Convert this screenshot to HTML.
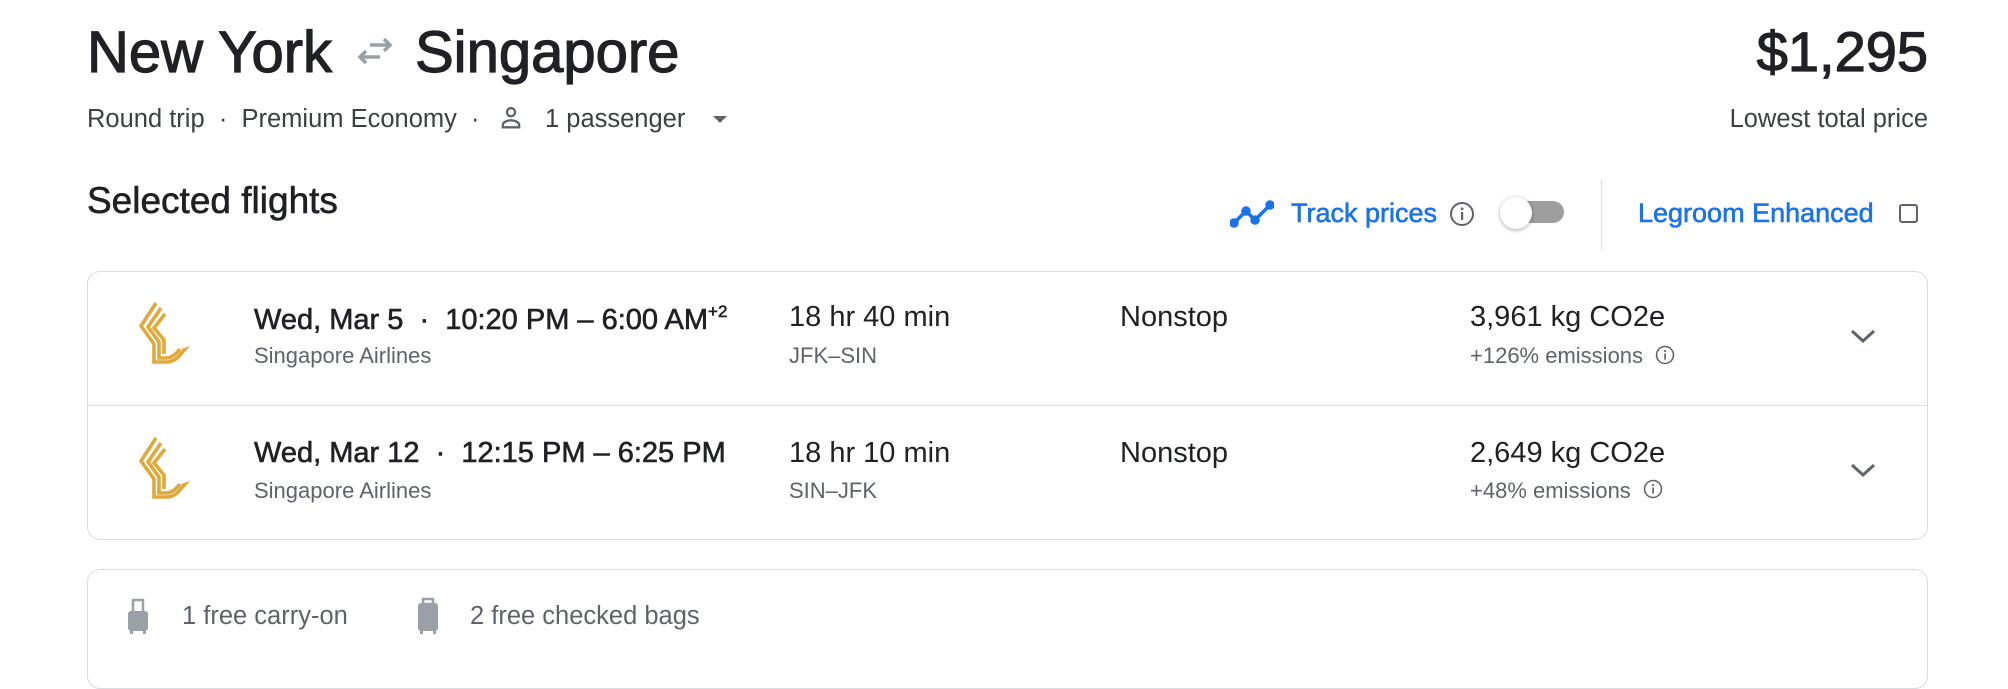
<!DOCTYPE html>
<html><head><meta charset="utf-8"><style>
*{margin:0;padding:0;box-sizing:border-box}
body{width:2008px;height:658px;overflow:hidden;background:#fff;font-family:"Liberation Sans",sans-serif;color:#202124;position:relative}
.a{position:absolute;white-space:nowrap}
.m{-webkit-text-stroke:0.6px currentColor}
.h{font-size:58px;-webkit-text-stroke:1.2px #202124;line-height:1}
.sub{font-size:25.5px;color:#3c4043;line-height:1}
.card{position:absolute;left:87px;width:1841px;border:1px solid #dadce0;border-radius:13px}
.p{font-size:29px;line-height:1}
.s{font-size:22px;color:#5f6368;line-height:1}
.blue{color:#1a73e8}
</style></head><body>
<div class="a h" style="left:87px;top:24px">New York</div>
<svg class="a" style="left:356px;top:36px" width="38" height="30" viewBox="0 0 38 30"><g stroke="#9aa0a6" stroke-width="3.5" fill="none"><path d="M14 9H34M28 3l6 6-6 6"/><path d="M24 21H4M10 15l-6 6 6 6"/></g></svg>
<div class="a h" style="left:415px;top:24px">Singapore</div>
<div class="a h" style="right:80px;top:24px;font-size:56px">$1,295</div>
<div class="a sub" style="left:87px;top:107px">Round trip &nbsp;·&nbsp; Premium Economy &nbsp;·</div>
<svg class="a" style="left:497px;top:104px" width="28" height="28" viewBox="0 0 24 24"><g fill="none" stroke="#5f6368" stroke-width="2"><circle cx="12" cy="7" r="3.5"/><path d="M5 20v-2c0-2.5 4-4 7-4s7 1.5 7 4v2z"/></g></svg>
<div class="a sub" style="left:545px;top:107px">1 passenger</div>
<svg class="a" style="left:712px;top:114px" width="16" height="10"><path d="M1 2h14l-7 7z" fill="#5f6368"/></svg>
<div class="a sub" style="right:80px;top:107px">Lowest total price</div>
<div class="a m" style="left:87px;top:182px;font-size:37px;line-height:1">Selected flights</div>

<svg class="a" style="left:1230px;top:200px" width="44" height="28" viewBox="0 0 44 28"><g stroke="#1a73e8" stroke-width="3.5" fill="#1a73e8"><path d="M4 23L16 11l9 9L40 5" fill="none"/><circle cx="4" cy="23" r="3"/><circle cx="16" cy="11" r="3"/><circle cx="25" cy="20" r="3"/><circle cx="40" cy="5" r="3"/></g></svg>
<div class="a m blue" style="left:1291px;top:200px;font-size:27px;line-height:1">Track prices</div>
<svg class="a" style="left:1449px;top:201px" width="26" height="26" viewBox="0 0 26 26"><circle cx="13" cy="13" r="11" fill="none" stroke="#5f6368" stroke-width="2"/><rect x="12" y="11" width="2.2" height="8" fill="#5f6368"/><circle cx="13.1" cy="7.8" r="1.4" fill="#5f6368"/></svg>
<div class="a" style="left:1502px;top:201px;width:62px;height:22px;border-radius:11px;background:#9e9e9e"></div>
<div class="a" style="left:1500px;top:197px;width:32px;height:32px;border-radius:50%;background:#fff;box-shadow:0 1px 4px rgba(0,0,0,.35)"></div>
<div class="a" style="left:1601px;top:179px;width:1px;height:71px;background:#dadce0"></div>
<div class="a m blue" style="left:1638px;top:200px;font-size:27px;line-height:1">Legroom Enhanced</div>
<div class="a" style="left:1899px;top:204px;width:19px;height:19px;border:2px solid #5f6368;border-radius:3px"></div>

<div class="card" style="top:271px;height:269px"></div>
<div class="a" style="left:88px;top:405px;width:1839px;height:1px;background:#dadce0"></div>

<svg class="a" style="left:138px;top:302px" width="52" height="66" viewBox="0 0 52 66"><g fill="none" stroke="#e0a93b" stroke-width="3.6" stroke-linejoin="miter"><path d="M18 1L3 24l13 18v18h12c8 0 12-4 18-12"/><path d="M23 6L10 25l11 15v16h7c6 0 10-4 14-9"/><path d="M27 12L16 26l10 12v14"/></g><path d="M43 47l9-3-5 6z" fill="#e0a93b"/></svg>
<div class="a p m" style="left:254px;top:303px">Wed, Mar 5 &nbsp;·&nbsp; 10:20 PM – 6:00 AM<sup style="font-size:17px;vertical-align:12px">+2</sup></div>
<div class="a s" style="left:254px;top:345px">Singapore Airlines</div>
<div class="a p" style="left:789px;top:303px">18 hr 40 min</div>
<div class="a s" style="left:789px;top:345px">JFK–SIN</div>
<div class="a p" style="left:1120px;top:303px">Nonstop</div>
<div class="a p" style="left:1470px;top:303px">3,961 kg CO2e</div>
<div class="a s" style="left:1470px;top:345px">+126% emissions</div>
<svg class="a" style="left:1655px;top:345px" width="20" height="20" viewBox="0 0 26 26"><circle cx="13" cy="13" r="11" fill="none" stroke="#5f6368" stroke-width="2"/><rect x="12" y="11" width="2.2" height="8" fill="#5f6368"/><circle cx="13.1" cy="7.8" r="1.4" fill="#5f6368"/></svg>
<svg class="a" style="left:1850px;top:328px" width="26" height="16"><path d="M2 3l11 10L24 3" fill="none" stroke="#5f6368" stroke-width="3"/></svg>

<svg class="a" style="left:138px;top:437px" width="52" height="66" viewBox="0 0 52 66"><g fill="none" stroke="#e0a93b" stroke-width="3.6" stroke-linejoin="miter"><path d="M18 1L3 24l13 18v18h12c8 0 12-4 18-12"/><path d="M23 6L10 25l11 15v16h7c6 0 10-4 14-9"/><path d="M27 12L16 26l10 12v14"/></g><path d="M43 47l9-3-5 6z" fill="#e0a93b"/></svg>
<div class="a p m" style="left:254px;top:439px">Wed, Mar 12 &nbsp;·&nbsp; 12:15 PM – 6:25 PM</div>
<div class="a s" style="left:254px;top:480px">Singapore Airlines</div>
<div class="a p" style="left:789px;top:439px">18 hr 10 min</div>
<div class="a s" style="left:789px;top:480px">SIN–JFK</div>
<div class="a p" style="left:1120px;top:439px">Nonstop</div>
<div class="a p" style="left:1470px;top:439px">2,649 kg CO2e</div>
<div class="a s" style="left:1470px;top:480px">+48% emissions</div>
<svg class="a" style="left:1643px;top:479px" width="20" height="20" viewBox="0 0 26 26"><circle cx="13" cy="13" r="11" fill="none" stroke="#5f6368" stroke-width="2"/><rect x="12" y="11" width="2.2" height="8" fill="#5f6368"/><circle cx="13.1" cy="7.8" r="1.4" fill="#5f6368"/></svg>
<svg class="a" style="left:1850px;top:462px" width="26" height="16"><path d="M2 3l11 10L24 3" fill="none" stroke="#5f6368" stroke-width="3"/></svg>

<div class="card" style="top:569px;height:120px"></div>
<svg class="a" style="left:126px;top:597px" width="24" height="38" viewBox="0 0 24 38"><path d="M7 14V3h10v11" fill="none" stroke="#9aa0a6" stroke-width="2.5"/><rect x="2" y="14" width="20" height="20" rx="3" fill="#9aa0a6"/><rect x="4" y="34" width="3" height="3" fill="#9aa0a6"/><rect x="17" y="34" width="3" height="3" fill="#9aa0a6"/></svg>
<div class="a" style="left:182px;top:604px;font-size:25.5px;color:#5f6368;line-height:1">1 free carry-on</div>
<svg class="a" style="left:415px;top:597px" width="26" height="38" viewBox="0 0 26 38"><rect x="8" y="2" width="10" height="5" fill="none" stroke="#9aa0a6" stroke-width="2.5"/><rect x="3" y="6" width="20" height="28" rx="3" fill="#9aa0a6"/><rect x="5" y="34" width="3" height="3" fill="#9aa0a6"/><rect x="18" y="34" width="3" height="3" fill="#9aa0a6"/></svg>
<div class="a" style="left:470px;top:604px;font-size:25.5px;color:#5f6368;line-height:1">2 free checked bags</div>
</body></html>
